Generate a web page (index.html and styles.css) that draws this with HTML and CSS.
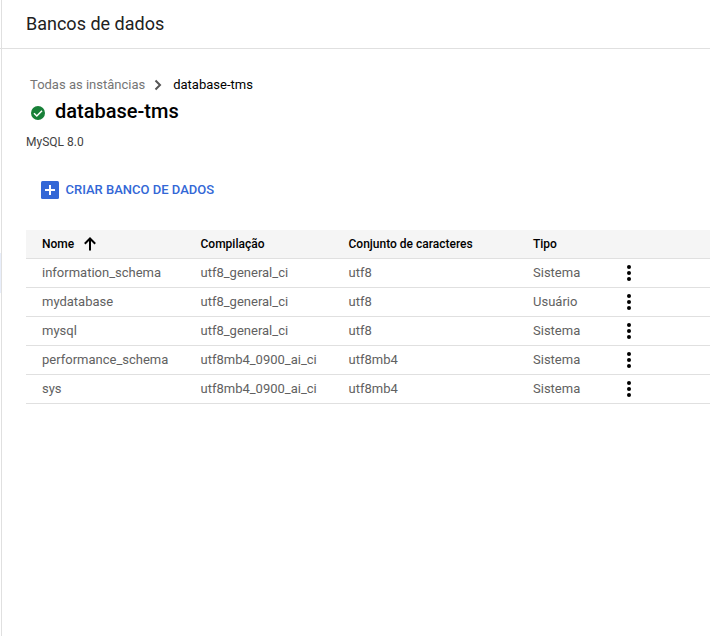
FILE: index.html
```html
<!DOCTYPE html>
<html lang="pt-BR">
<head>
<meta charset="utf-8">
<title>Bancos de dados</title>
<link rel="stylesheet" href="styles.css">
</head>
<body>
<div class="app">
  <div class="rail"><div class="rail-active"></div></div>
  <main class="main">
    <header class="page-header"><h1><span>Bancos de dados</span></h1></header>
    <nav class="crumbs">
      <span class="crumb-link">Todas as instâncias</span>
      <svg class="chevron" width="8" height="12" viewBox="0 0 8 12"><path d="M1.5 1.5 6 6 1.5 10.5" fill="none" stroke="#555" stroke-width="2"/></svg>
      <span class="crumb-current">database-tms</span>
    </nav>
    <div class="title">
      <svg class="status" width="14" height="14" viewBox="0 0 14 14"><circle cx="7" cy="7" r="7" fill="#188038"/><path d="M3 7.2 5.8 10 11 4.8" fill="none" stroke="#fff" stroke-width="1.5"/></svg>
      <h2><span>database-tms</span></h2>
    </div>
    <p class="version"><span>MySQL 8.0</span></p>
    <button class="create">
      <svg width="18" height="18" viewBox="0 0 18 18"><rect width="18" height="18" rx="1.5" fill="#3367d6"/><path d="M8 4h2v4h4v2h-4v4H8v-4H4V8h4z" fill="#fff"/></svg>
      <span>CRIAR BANCO DE DADOS</span>
    </button>
    <div class="table">
      <div class="row head"><span class="sort"><span>Nome</span><svg width="12" height="14" viewBox="0 0 12 14"><path d="M6 13.5V1.5M.8 6.7 6 1.5l5.2 5.2" fill="none" stroke="#000" stroke-width="2"/></svg></span><span>Compilação</span><span>Conjunto de caracteres</span><span>Tipo</span><span></span></div>
      <div class="row"><span>information_schema</span><span>utf8_general_ci</span><span>utf8</span><span>Sistema</span><svg class="more" viewBox="0 0 4 16"><circle cx="2" cy="2" r="2"/><circle cx="2" cy="8" r="2"/><circle cx="2" cy="14" r="2"/></svg></div>
      <div class="row"><span>mydatabase</span><span>utf8_general_ci</span><span>utf8</span><span>Usuário</span><svg class="more" viewBox="0 0 4 16"><circle cx="2" cy="2" r="2"/><circle cx="2" cy="8" r="2"/><circle cx="2" cy="14" r="2"/></svg></div>
      <div class="row"><span>mysql</span><span>utf8_general_ci</span><span>utf8</span><span>Sistema</span><svg class="more" viewBox="0 0 4 16"><circle cx="2" cy="2" r="2"/><circle cx="2" cy="8" r="2"/><circle cx="2" cy="14" r="2"/></svg></div>
      <div class="row"><span>performance_schema</span><span>utf8mb4_0900_ai_ci</span><span>utf8mb4</span><span>Sistema</span><svg class="more" viewBox="0 0 4 16"><circle cx="2" cy="2" r="2"/><circle cx="2" cy="8" r="2"/><circle cx="2" cy="14" r="2"/></svg></div>
      <div class="row"><span>sys</span><span>utf8mb4_0900_ai_ci</span><span>utf8mb4</span><span>Sistema</span><svg class="more" viewBox="0 0 4 16"><circle cx="2" cy="2" r="2"/><circle cx="2" cy="8" r="2"/><circle cx="2" cy="14" r="2"/></svg></div>
    </div>
  </main>
</div>
</body>
</html>
```
FILE: styles.css
```css
* { box-sizing: border-box; }
body { margin: 0; background: #fff; color: #000; font-family: Roboto, sans-serif; font-size: 13px; }
h1, h2, p { margin: 0; }
svg { display: block; flex: none; }
.app { display: flex; height: 636px; width: 710px; overflow: hidden; }
.rail { width: 2px; border-right: 1px solid #e0e0e0; padding-top: 253px; }
.rail-active { height: 40px; background: #e8eefb; }
.main { flex: 1; }
.page-header { height: 49px; border-bottom: 1px solid #e0e0e0; margin-left: -2px; padding-left: 26px; }
.page-header h1 { font-size: 18px; font-weight: 400; line-height: 48px; letter-spacing: 0; color: #212121; }
.crumbs { display: flex; align-items: center; height: 20px; margin: 26px 0 0 28px; }
.crumbs span { padding-bottom: 2px; }
.crumb-link { color: #757575; }
.chevron { margin: 0 11px 0 9px; }
.title { display: flex; align-items: center; height: 28px; margin: 2px 0 0 29px; }
.title h2 { font-size: 20px; font-weight: 500; line-height: 28px; margin-left: 10px; }
.status { margin-top: 3px; }
.version { font-size: 12px; line-height: 18px; margin: 8px 0 0 24px; color: #424242; }
.create { display: flex; align-items: center; gap: 6.5px; height: 18px; margin: 30px 0 0 39px; padding: 0; border: 0; background: none; font: 500 13px/18px Roboto, sans-serif; color: #3367d6; }
.table { margin: 31px 0 0 24px; }
.row { display: grid; grid-template-columns: 158.5px 148px 184.5px 93.5px 1fr; align-items: center; height: 29px; padding-left: 16px; border-bottom: 1px solid #e0e0e0; color: #616161; }
.row:not(.head) > span { padding-bottom: 2px; }
.head { background: #f5f5f5; color: #000; font-size: 12px; font-weight: 500; }
.sort { display: flex; align-items: center; gap: 10px; }
.more { width: 4px; height: 16px; fill: #000; }
```
